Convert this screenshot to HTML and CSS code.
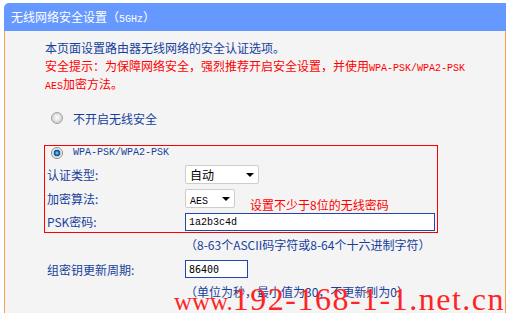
FILE: index.html
```html
<!DOCTYPE html>
<html lang="zh-CN">
<head>
    <meta charset="UTF-8">
    <meta name="viewport" content="width=device-width, initial-scale=1.0">
    <title>无线网络安全设置（5GHz）</title>
    <link rel="stylesheet" href="styles.css">
</head>
<body>
    <div class="panel">
        <div class="panel-head">无线网络安全设置（<span class="en">5GHz</span>）</div>

        <div class="panel-body">
            <div class="intro">
                <p class="blue">本页面设置路由器无线网络的安全认证选项。</p>
                <p class="red">安全提示：为保障网络安全，强烈推荐开启安全设置，并使用<span class="en">WPA-PSK/WPA2-PSK</span><br><span class="en">AES</span>加密方法。</p>
            </div>

            <div class="form">
                <label class="check-row off">
                    <input type="radio" name="sec">
                    <span>不开启无线安全</span>
                </label>

                <div class="box">
                    <label class="check-row">
                        <input type="radio" name="sec" checked>
                        <span class="en">WPA-PSK/WPA2-PSK</span>
                    </label>

                    <div class="row">
                        <span class="label">认证类型:</span>
                        <div class="select wide"><span>自动</span></div>
                    </div>
                    <div class="row">
                        <span class="label">加密算法:</span>
                        <div class="select narrow"><span class="en">AES</span></div>
                    </div>
                    <div class="row last">
                        <span class="label">PSK密码:</span>
                        <input class="field psk" type="text" value="1a2b3c4d">
                    </div>

                    <div class="tip">设置不少于8位的无线密码</div>
                </div>

                <div class="note">（8-63个ASCII码字符或8-64个十六进制字符）</div>

                <div class="row out">
                    <span class="label">组密钥更新周期:</span>
                    <input class="field period" type="text" value="86400">
                </div>

                <div class="note short">（单位为秒，最小值为30，不更新则为0）</div>
            </div>
        </div>
    </div>

    <div class="watermark"><span class="www">www.</span>192-168-1-1.net.cn</div>
</body>
</html>
```

FILE: styles.css
```css
html, body {
    overflow: hidden;
}

body {
    margin: 0;
    background: #fff;
    font-family: "Noto Sans CJK SC", sans-serif;
    font-size: 12px;
    color: #173f9c;
}

.en {
    font-family: "Liberation Mono", monospace;
    font-size: 10px;
    line-height: 1;
}

.blue {
    color: #173f9c;
}

.red {
    color: #ff0000;
}

.panel {
    width: 502px;
    margin: 3px 3px 0 4px;
}

.panel-head {
    height: 28px;
    line-height: 28px;
    padding-left: 7px;
    background: #6699ff;
    border-radius: 5px 0 0 0;
    color: #fff;
}

.panel-body {
    box-sizing: border-box;
    height: 282px;
    padding: 8px 0 0 40px;
    background: #f4f4f4;
    border-left: 1px solid #f7a14b;
    border-right: 1px solid #f7a14b;
}

.intro p {
    margin: 0;
    line-height: 18px;
}

.form {
    width: 394px;
    margin: 14px 0 0 -1px;
}

.check-row {
    display: flex;
    align-items: center;
    gap: 10px;
    height: 13px;
    padding-left: 6px;
}

.check-row.off {
    height: 22px;
    padding-left: 7px;
}

input[type=radio] {
    appearance: none;
    -webkit-appearance: none;
    box-sizing: border-box;
    width: 12px;
    height: 12px;
    margin: 0;
    border: 1px solid #a2a2a2;
    border-radius: 50%;
    background: radial-gradient(circle at 50% 45%, #fff 0, #e6e6e6 3px, #c9c9c9 6px);
}

input[type=radio]:checked {
    border-color: #8c8c8c;
    background: radial-gradient(circle at 50% 50%, #9fdcff 0, #2f86cf 1.5px, #0c4485 3px, #cfd6dc 3.6px, #f6f6f6 5px);
}

.box {
    position: relative;
    height: 86px;
    margin-top: 16px;
    border: 1px solid #ff0000;
}

.box .check-row {
    margin-bottom: 3px;
}

.row {
    display: flex;
    align-items: center;
    height: 24px;
    padding-left: 2px;
}

.row.last {
    height: 22px;
    align-items: flex-end;
}

.row.last .label {
    align-self: center;
}

.row.out {
    padding-left: 3px;
}

.label {
    width: 138px;
    flex: none;
}

.select {
    position: relative;
    box-sizing: border-box;
    height: 19px;
    line-height: 17px;
    padding-left: 4px;
    background: #fff;
    border: 1px solid #cdcdcd;
    border-radius: 2px;
    color: #000;
}

.select.wide {
    width: 74px;
}

.select.narrow {
    width: 50px;
}

.select::after {
    content: "";
    position: absolute;
    right: 4px;
    top: 7px;
    border-left: 4px solid transparent;
    border-right: 4px solid transparent;
    border-top: 4px solid #000;
}

.field {
    box-sizing: border-box;
    height: 18px;
    margin: 0 0 1px 0;
    padding: 0 3px;
    background: #fff;
    border: 1px solid #2148a6;
    color: #000;
    font-family: "Liberation Mono", monospace;
    font-size: 10px;
    outline: none;
}

.field.psk {
    width: 250px;
}

.field.period {
    width: 63px;
    margin: 0;
    font-family: "DejaVu Sans Mono", monospace;
}

.tip {
    position: absolute;
    left: 205px;
    top: 52px;
    line-height: 14px;
    color: #ff0000;
    white-space: nowrap;
}

.note {
    height: 24px;
    line-height: 24px;
    padding-left: 141px;
    white-space: nowrap;
}

.row.out + .note {
    height: 22px;
    line-height: 22px;
}

.watermark {
    position: absolute;
    left: 174px;
    top: 283px;
    font-family: "Liberation Serif", serif;
    font-size: 32px;
    line-height: 32px;
    letter-spacing: 1.5px;
    color: #ff2424;
    white-space: nowrap;
}

.watermark .www {
    font-size: 25px;
    letter-spacing: 0;
}
```
